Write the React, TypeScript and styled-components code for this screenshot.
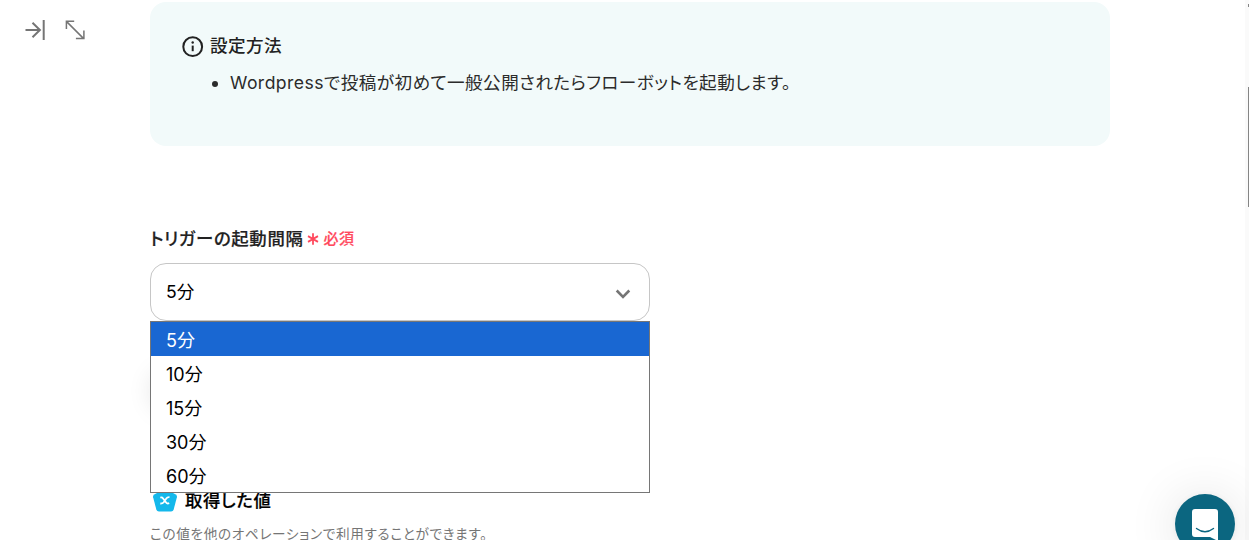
import { ReactNode, useState } from "react";
import styled, { createGlobalStyle } from "styled-components";

const GlobalStyle = createGlobalStyle`
  * {
    box-sizing: border-box;
  }
  body {
    margin: 0;
    background-color: #fff;
    color: #222;
    font-family: Inter, "Noto Sans CJK JP", sans-serif;
    font-feature-settings: "palt";
    letter-spacing: 0.44px;
    overflow: hidden;
  }
`;

const Page = styled.div`
  position: relative;
  display: flex;
  height: 540px;
  overflow: hidden;
`;

const Sidebar = styled.nav`
  display: flex;
  align-items: flex-start;
  gap: 18px;
  width: 150px;
  padding: 19px 0 0 24px;
  color: #757575;
`;

const IconButton = styled.button`
  display: flex;
  padding: 0;
  border: none;
  background: none;
  color: inherit;
`;

const Main = styled.main`
  width: 960px;
  padding-top: 2px;
`;

const InfoCard = styled.section`
  height: 144px;
  padding: 29px 32px 0;
  border-radius: 16px;
  background-color: #f2fafa;
`;

const InfoTitle = styled.div`
  display: flex;
  align-items: center;
  gap: 6px;
  height: 26px;
  font-size: 17.6px;
  font-weight: 500;
  svg {
    margin-top: 6px;
  }
`;

const InfoList = styled.ul`
  margin: 12px 0 0;
  padding-left: 48px;
  color: #2b2b2b;
  font-size: 17.6px;
  line-height: 28px;
`;

const Field = styled.section`
  margin-top: 78px;
`;

const Label = styled.div`
  display: flex;
  align-items: center;
  height: 26px;
  font-size: 17.4px;
  font-weight: 500;
  letter-spacing: 0.64px;
  -webkit-text-stroke: 0.2px;
`;

const Required = styled.span`
  display: flex;
  align-items: center;
  gap: 4px;
  margin-left: 4px;
  color: #ff4a5e;
  font-size: 15px;
  letter-spacing: 0.6px;
  svg {
    margin-top: 3px;
  }
`;

const SelectWrap = styled.div`
  position: relative;
  width: 500px;
  margin-top: 13px;
`;

const SelectBox = styled.button`
  display: flex;
  align-items: center;
  justify-content: space-between;
  width: 100%;
  height: 58px;
  padding: 0 18px 3px 15px;
  border: 1px solid #c6c6c6;
  border-radius: 16px;
  background-color: #fff;
  color: #000;
  font: inherit;
  font-size: 17.6px;
  letter-spacing: 0;
  svg {
    margin-top: 6px;
  }
`;

const Options = styled.ul`
  position: absolute;
  top: 58px;
  left: 0;
  z-index: 1;
  width: 100%;
  height: 172px;
  margin: 0;
  padding: 0;
  border: 1px solid #767676;
  background-color: #fff;
  list-style: none;
`;

const Option = styled.li<{ $active: boolean }>`
  height: 34px;
  padding-left: 15px;
  background-color: ${(props) => (props.$active ? "#1967d2" : "#fff")};
  color: ${(props) => (props.$active ? "#fff" : "#000")};
  font-size: 18px;
  letter-spacing: 0;
  line-height: 38px;
`;

const SaveArea = styled.div`
  display: flex;
  height: 165px;
  padding-top: 48px;
`;

const SaveButton = styled.button`
  width: 160px;
  height: 44px;
  border: none;
  border-radius: 22px;
  background-color: #fff;
  box-shadow: 0 0 24px rgba(0, 0, 0, 0.1);
`;

const ValueTitle = styled.div`
  display: flex;
  align-items: center;
  gap: 7px;
  height: 26px;
  padding-left: 2px;
  color: #000;
  font-size: 17.4px;
  font-weight: 500;
  letter-spacing: 0.6px;
  -webkit-text-stroke: 0.2px;
  svg {
    margin-top: 3px;
  }
`;

const Note = styled.p`
  margin: 11px 0 0;
  color: #757575;
  font-size: 13.6px;
  letter-spacing: 0.68px;
  line-height: 22px;
`;

const ChatButton = styled.button`
  position: absolute;
  top: 494px;
  right: 14px;
  width: 60px;
  height: 60px;
  padding: 0;
  border: none;
  border-radius: 50%;
  background-color: #0b6680;
  box-shadow: 0 1px 6px rgba(0, 0, 0, 0.06), 0 2px 52px rgba(0, 0, 0, 0.12);
  svg {
    display: block;
  }
`;

const ScrollTrack = styled.div`
  position: absolute;
  top: 0;
  right: 0;
  width: 4px;
  height: 100%;
  background-color: #fafafa;
`;

const ScrollMark = styled.div<{ $top: number; $height: number }>`
  position: absolute;
  top: ${(props) => props.$top}px;
  right: 0;
  width: 1px;
  height: ${(props) => props.$height}px;
  background-color: #858585;
`;

const intervals = ["5分", "10分", "15分", "30分", "60分"];

function RequiredMark({ children }: { children: ReactNode }) {
  return (
    <Required>
      <svg width="12" height="12" viewBox="0 0 12 12" stroke="currentColor" strokeWidth="1.8">
        <path d="M6 .2v11.6M1 3.1l10 5.8M11 3.1L1 8.9" />
      </svg>
      {children}
    </Required>
  );
}

function App() {
  const [selected, setSelected] = useState(intervals[0]);

  return (
    <>
      <GlobalStyle />
      <Page>
        <Sidebar>
          <IconButton aria-label="collapse">
            <svg width="22" height="22" viewBox="0 0 22 22" fill="none" stroke="currentColor" strokeWidth="2">
              <path d="M1.5 11h15M8.5 3.8l7.4 7.2-7.4 7.2M19.7 1v20" />
            </svg>
          </IconButton>
          <IconButton aria-label="expand">
            <svg width="22" height="22" viewBox="0 0 22 22" fill="none" stroke="currentColor" strokeWidth="1.5">
              <path d="M2.4 2.4l17 17M10.2 2.2H2.4v7.8M11.9 19.4h8v-8" />
            </svg>
          </IconButton>
        </Sidebar>
        <Main>
          <InfoCard>
            <InfoTitle>
              <svg width="22" height="22" viewBox="0 0 22 22" fill="none" stroke="currentColor">
                <circle cx="10.7" cy="10.7" r="9.4" strokeWidth="2" />
                <path d="M10.7 9.6v5.6" strokeWidth="2" />
                <circle cx="10.7" cy="6.5" r="1.2" fill="currentColor" stroke="none" />
              </svg>
              設定方法
            </InfoTitle>
            <InfoList>
              <li>Wordpressで投稿が初めて一般公開されたらフローボットを起動します。</li>
            </InfoList>
          </InfoCard>
          <Field>
            <Label>
              トリガーの起動間隔
              <RequiredMark>必須</RequiredMark>
            </Label>
            <SelectWrap>
              <SelectBox>
                {selected}
                <svg width="16" height="10" viewBox="0 0 16 10" fill="none" stroke="#757575" strokeWidth="2.6">
                  <path d="M1.7 1.5L8 7.8l6.3-6.3" />
                </svg>
              </SelectBox>
              <Options>
                {intervals.map((interval) => (
                  <Option
                    key={interval}
                    $active={interval === selected}
                    onClick={() => setSelected(interval)}
                  >
                    {interval}
                  </Option>
                ))}
              </Options>
            </SelectWrap>
          </Field>
          <SaveArea>
            <SaveButton aria-label="save" />
          </SaveArea>
          <ValueTitle>
            <svg width="26" height="24" viewBox="0 0 26 24">
              <path d="M11 .8q2-1 4 0l8.8 4.8q1.500 1 1.100 2.600l-3.300 12.500q-.6 1.800-2.500 1.800H6.900q-1.900 0-2.500-1.800L1.100 8.200q-.4-1.600 1.100-2.600z" fill="#14b8eb" />
              <path d="M8.300 8.600q1.800-.6 2.800.8l3 4.200q1 1.400 3.100.6M17.500 8.200q-2.200-.2-3.200 1.300l-2.600 3.700q-1.200 1.500-3.400 1.300" fill="none" stroke="#fff" strokeWidth="1.800" />
            </svg>
            取得した値
          </ValueTitle>
          <Note>この値を他のオペレーションで利用することができます。</Note>
        </Main>
        <ScrollTrack>
          <ScrollMark $top={4} $height={3} />
          <ScrollMark $top={87} $height={120} />
        </ScrollTrack>
        <ChatButton aria-label="chat">
          <svg width="60" height="60" viewBox="0 0 60 60">
            <path d="M20 15h20q3 0 3 3v29l-8-4H20q-3 0-3-3V18q0-3 3-3z" fill="#fff" />
            <path d="M21.5 34.5q8.5 6.5 17 0" fill="none" stroke="#0b6680" strokeWidth="1.4" strokeLinecap="round" />
          </svg>
        </ChatButton>
      </Page>
    </>
  );
}

export default App;
